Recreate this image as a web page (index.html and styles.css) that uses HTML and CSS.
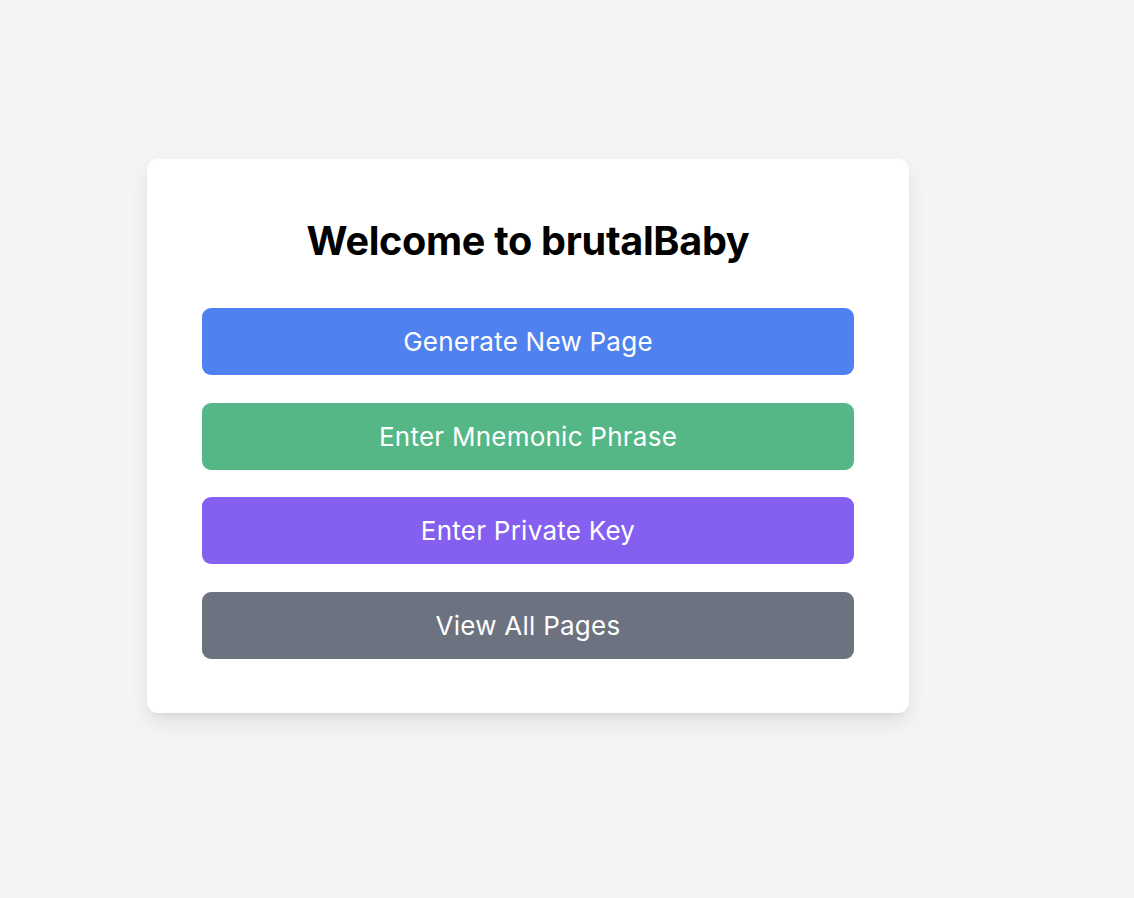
FILE: index.html
```html
<!DOCTYPE html>
<html lang="en">
<head>
<meta charset="utf-8">
<title>brutalBaby</title>
<link rel="stylesheet" href="styles.css">
</head>
<body>
<main class="page">
  <section class="card">
    <h1 class="title">Welcome to brutalBaby</h1>
    <div class="actions">
      <button class="btn btn-blue">Generate New Page</button>
      <button class="btn btn-green">Enter Mnemonic Phrase</button>
      <button class="btn btn-purple">Enter Private Key</button>
      <button class="btn btn-gray">View All Pages</button>
    </div>
  </section>
</main>
</body>
</html>
```

FILE: styles.css
```css
* { box-sizing: border-box; }
html, body { margin: 0; padding: 0; }
body {
  background: #f3f4f6;
  font-family: Inter, "Noto Sans", sans-serif;
  min-height: 898px;
}
.page {
  padding: 159px 0 0 147px;
}
.card {
  width: 762px;
  background: #ffffff;
  border-radius: 11px;
  padding: 55px 55px 54px;
  box-shadow: 0 10px 22px -3px rgba(0,0,0,0.10), 0 4px 8px -4px rgba(0,0,0,0.08);
}
.title {
  margin: 3px 0 43px;
  font-size: 39.6px;
  line-height: 48px;
  font-weight: 700;
  text-align: center;
  color: #000;
  letter-spacing: -0.3px;
}
.actions {
  display: flex;
  flex-direction: column;
  gap: 27.5px;
}
.btn {
  display: block;
  width: 100%;
  height: 67px;
  border: 0;
  border-radius: 9px;
  font-family: inherit;
  font-size: 26px;
  line-height: 30px;
  letter-spacing: 0.25px;
  color: #fff;
  padding: 1px 0 0;
  cursor: pointer;
}
.btn-blue { background: #4f82ee; }
.btn-green { background: #54b785; }
.btn-purple { background: #845ff0; }
.btn-gray { background: #6d7280; }
```
